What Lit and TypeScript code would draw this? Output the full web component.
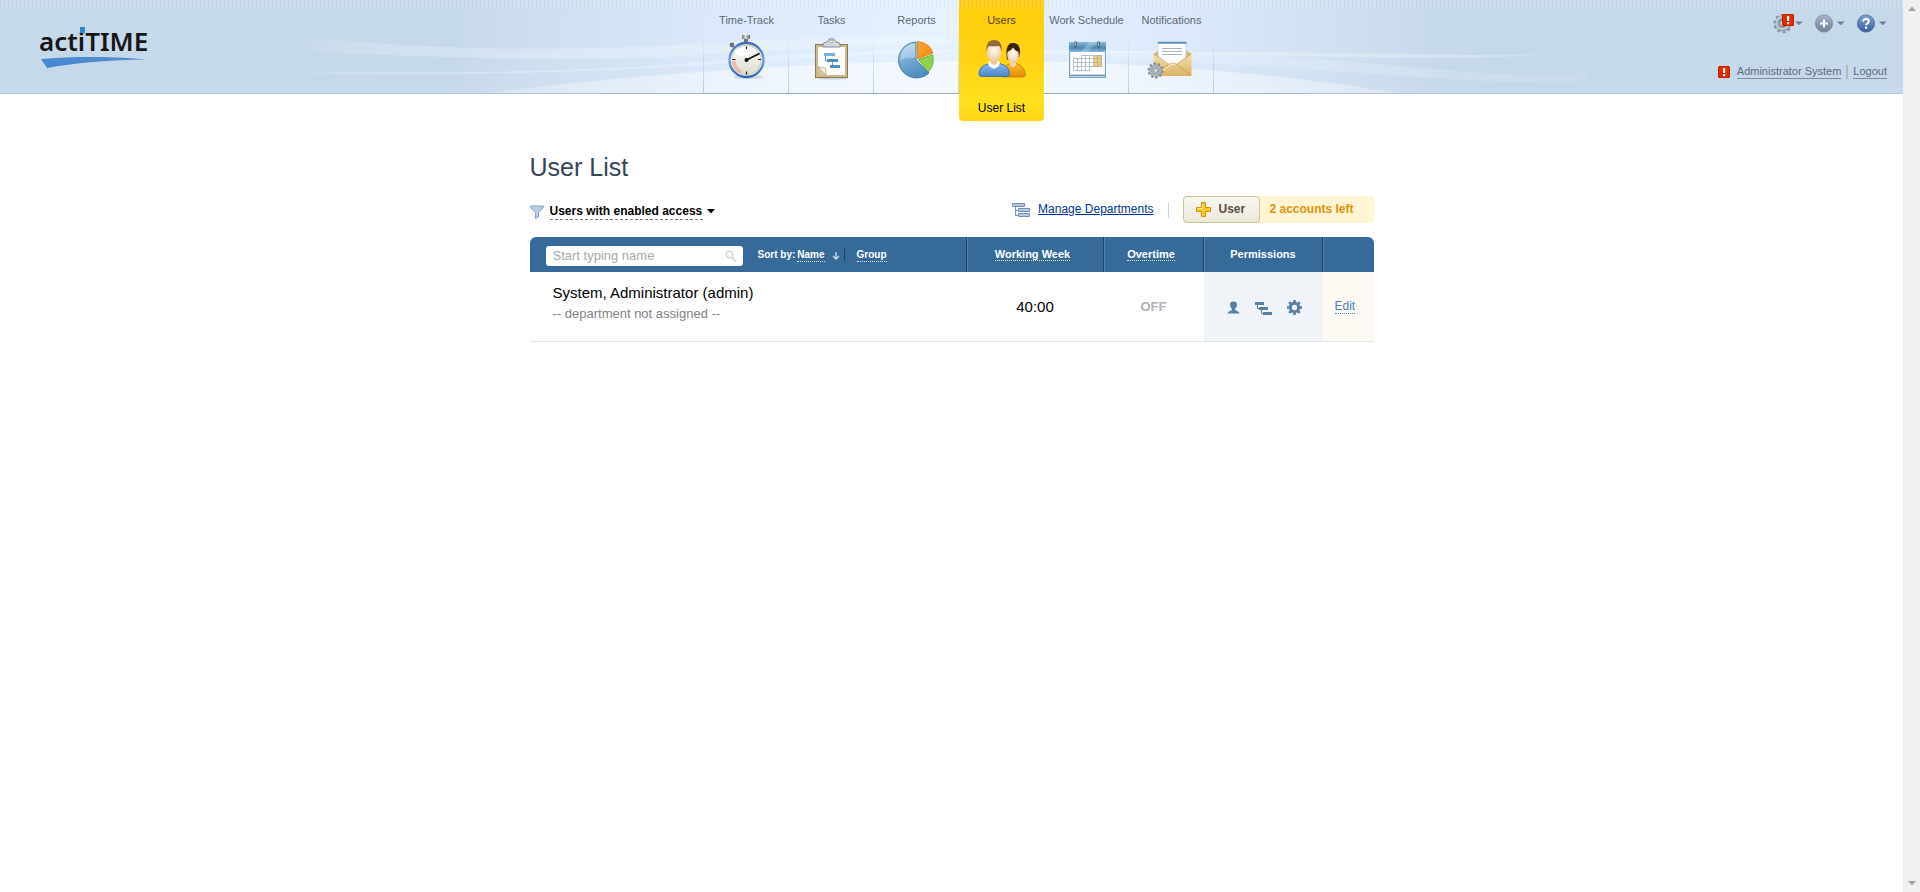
import { LitElement, html, svg, css, nothing } from "lit";
import { customElement, property } from "lit/decorators.js";

const stopwatchIcon = svg`
  <defs>
    <linearGradient id="swRing" x1="0" y1="0" x2="0" y2="1"><stop offset="0" stop-color="#3c6cb8"/><stop offset=".5" stop-color="#6f9fdc"/><stop offset="1" stop-color="#2d62ab"/></linearGradient>
    <linearGradient id="swFace" x1="0" y1="0" x2="0" y2="1"><stop offset="0" stop-color="#fff"/><stop offset="1" stop-color="#dddccd"/></linearGradient>
    <linearGradient id="swMetal"><stop offset="0" stop-color="#777"/><stop offset=".45" stop-color="#ddd"/><stop offset="1" stop-color="#666"/></linearGradient>
  </defs>
  <ellipse cx="25" cy="43" rx="15" ry="2" fill="#8ba3c0" opacity=".35"/>
  <rect x="19" y="1" width="8" height="4" fill="url(#swMetal)"/>
  <rect x="21" y="5" width="4" height="3" fill="#777"/>
  <circle cx="9" cy="11" r="2.4" fill="#6e6e6e"/>
  <path d="M10 12l3 3" stroke="#888" stroke-width="1.5"/>
  <circle cx="23.500" cy="26" r="17" fill="#fff" stroke="url(#swRing)" stroke-width="2.4"/>
  <circle cx="23.500" cy="26" r="14.600" fill="url(#swFace)" stroke="#c9c8bb" stroke-width="1.200"/>
  <path d="M11 27a12.500 12.500 0 0 0 7 11" fill="none" stroke="#f2b9a6" stroke-width="3.400"/>
  <ellipse cx="18" cy="18" rx="6" ry="4" fill="#fff"/>
  <path d="M23.500 12.500v2.500M23.500 37.500v3M9.500 25.500h3M35 25.500h3" stroke="#111" stroke-width="1.100"/>
  <path d="M23.500 26L36.500 19.500" stroke="#111" stroke-width="1.600"/>
  <circle cx="23.500" cy="26" r="2" fill="#111"/>`;

const tasksIcon = svg`
  <ellipse cx="24" cy="44.500" rx="15" ry="1.200" fill="#8ba3c0" opacity=".4"/>
  <rect x="7.500" y="10.500" width="32" height="33" fill="#cbb98d" stroke="#8d7a4c"/>
  <path d="M10 13h27v28H19l-9-9z" fill="#fff"/>
  <path d="M10 33l1 8h8z" fill="#d8c798"/>
  <path d="M10 33l7.500 8 .5-7z" fill="#f4f0e2" stroke="#b9ab84" stroke-width=".8"/>
  <path d="M15 13v-3q0-1.500 4-2 1.500-3.500 4.500-3.500t4.500 3.500q4 .5 4 2v3z" fill="#d5d8dc" stroke="#7c8086" stroke-width=".9"/>
  <circle cx="23.500" cy="7.500" r="1.400" fill="#fff" stroke="#888" stroke-width=".7"/>
  <path d="M17.500 22v5h3M24.500 28v5h3" fill="none" stroke="#6e9bc9" stroke-width="1"/>
  <rect x="16" y="19" width="11" height="3" fill="#7aaee2"/>
  <rect x="19" y="25" width="11" height="3" fill="#4d8ccb"/>
  <rect x="22" y="31" width="10" height="3" fill="#4d8ccb"/>`;

const reportsIcon = svg`
  <defs>
    <linearGradient id="pieBlue" x1="0" y1="0" x2=".3" y2="1"><stop offset="0" stop-color="#b9daf0"/><stop offset=".45" stop-color="#7fb1d6"/><stop offset="1" stop-color="#4f8fc0"/></linearGradient>
    <linearGradient id="pieOrange" x1="0" y1="0" x2="1" y2="1"><stop offset="0" stop-color="#f7a92c"/><stop offset="1" stop-color="#f08a12"/></linearGradient>
  </defs>
  <path d="M23 26V8a18 18 0 1 0 13 31z" fill="url(#pieBlue)" stroke="#3b78a4" stroke-width=".9"/>
  <path d="M22 10Q8 12 7.500 26q7-3 15-2z" fill="#fff" opacity=".3"/>
  <path d="M24.500 24.500V7.500q12 1 15.500 11.500z" fill="url(#pieOrange)" stroke="#d77a0c" stroke-width=".8"/>
  <path d="M25 25.500l14.800-4.700q2.200 10-4.400 17.200z" fill="#8fd14c" stroke="#6aaa2b" stroke-width=".8"/>`;

const usersIcon = svg`
  <defs>
    <linearGradient id="usBlue" x1="0" y1="0" x2="0" y2="1"><stop offset="0" stop-color="#8dbbee"/><stop offset="1" stop-color="#4a86cc"/></linearGradient>
    <linearGradient id="usOrange" x1="0" y1="0" x2="0" y2="1"><stop offset="0" stop-color="#fdc02f"/><stop offset="1" stop-color="#e28a00"/></linearGradient>
    <radialGradient id="usSkin" cx=".5" cy=".4" r=".6"><stop offset="0" stop-color="#fffaf4"/><stop offset="1" stop-color="#edc9a6"/></radialGradient>
  </defs>
  <path d="M24 41q0-9 6-10.500l5-1.500q11 1 12.500 11 0 3-3 3H24z" fill="url(#usOrange)" stroke="#c07400" stroke-width=".7"/>
  <path d="M29 25.500q-2.500-16.500 6-16.500 7.500 0 7 10l-1 4-10 3z" fill="#4a2a14"/>
  <path d="M32 27h6v4l-3 2.500-3-2.500z" fill="#f4d3ae"/>
  <ellipse cx="35" cy="21" rx="5.800" ry="8" fill="url(#usSkin)"/>
  <path d="M29 18q1-9 6-9t6.500 9q-4-.5-6.500-4.500-2 3.500-6 4.500z" fill="#3d2210"/>
  <path d="M.8 40Q1 32 10 30l2-1.500h9l2 1.500q8 1.500 8.500 10 0 2.500-3 2.500H4Q.8 42.500.8 40z" fill="url(#usBlue)" stroke="#2f67ad" stroke-width=".8"/>
  <path d="M10 28l6-3 6 3-1 4-5 3-5-3z" fill="#fff"/>
  <path d="M12.500 25h7v4q-3 4-7 0z" fill="#eec79f"/>
  <ellipse cx="16" cy="18" rx="7.200" ry="9.500" fill="url(#usSkin)"/>
  <path d="M8.500 18Q7.500 6 16 6t7.700 12q-1-5-2.700-6-5 .6-10 0-1.700 1-2.500 6z" fill="#94693c"/>`;

const scheduleIcon = svg`
  <defs>
    <linearGradient id="calTop" x1="0" y1="0" x2="0" y2="1"><stop offset="0" stop-color="#8ab8d8"/><stop offset=".6" stop-color="#4a89b6"/><stop offset="1" stop-color="#8dbbd9"/></linearGradient>
  </defs>
  <rect x="6.500" y="8.500" width="36" height="35" fill="#e9f0f7" stroke="#7ba3c2"/>
  <rect x="8" y="18" width="33" height="22" fill="#fff"/>
  <rect x="6" y="8" width="37" height="10" fill="url(#calTop)"/>
  <path d="M18 18l8-10h8l-9 10z" fill="#fff" opacity=".22"/>
  <path d="M7 41.500h35" stroke="#5b93ba" stroke-width="1.500"/>
  <rect x="31" y="21" width="8" height="12" fill="#f6cf6c"/>
  <path d="M18.500 21.500h20.500M10.500 24.500H39M10.500 28.500H39M10.500 32.500H39M10.500 36.500H27M10.500 24v12.500M14.500 24v12.500M18.500 21v15.500M22.500 21v15.500M26.500 21v15.500M30.500 21v12M34.500 21v12M38.500 21v12" fill="none" stroke="#a9b0be" stroke-width=".8"/>
  <path d="M12.500 8.500v4M35.500 8.500v4" stroke="#555f6b" stroke-width="2.600" stroke-linecap="round"/>
  <path d="M12.300 8v4M35.300 8v4" stroke="#c5ccd4" stroke-width=".9"/>`;

const notificationsIcon = svg`
  <defs>
    <linearGradient id="ntEnv" x1="0" y1="0" x2="0" y2="1"><stop offset="0" stop-color="#f3e1b0"/><stop offset="1" stop-color="#dcb468"/></linearGradient>
  </defs>
  <path d="M6 20l6-5h25l6 5v22H6z" fill="#d9b467"/>
  <path d="M10 8h28v17L27 34h-6l-11-9z" fill="#fff" stroke="#c9d3de" stroke-width=".8"/>
  <path d="M10 8.800h28.500" stroke="#4e8bbd" stroke-width="1.800"/>
  <path d="M14 14.500h20M14 17.500h20M14 20.500h20" stroke="#a9b4c1" stroke-width="1"/>
  <path d="M5.500 19.500L20 30.500h9l14.500-11v22h-38z" fill="url(#ntEnv)"/>
  <path d="M6 41l15-11q3.500-2.500 7 0l15 11M5.500 19.500L20 30M43.500 19.500L29 30" fill="none" stroke="#c29a4c" stroke-width=".8"/>
  <path d="M7.500 42L23 30.500" stroke="#fff4cf" stroke-width="1"/>
  <circle cx="7.500" cy="36.500" r="7" fill="none" stroke="#7f8894" stroke-width="2" stroke-dasharray="2.400 2"/>
  <circle cx="7.500" cy="36.500" r="4.600" fill="#e6ebf1" stroke="#8b94a0" stroke-width="3.400"/>
  <circle cx="7.500" cy="36.500" r="4.800" fill="none" stroke="#b4bdc8" stroke-width="1.400"/>
  <circle cx="7.500" cy="36.500" r="2" fill="#dfe6ee" stroke="#69727e" stroke-width=".8"/>`;

const sections = [
  { label: "Time-Track", icon: stopwatchIcon },
  { label: "Tasks", icon: tasksIcon },
  { label: "Reports", icon: reportsIcon },
  { label: "Users", icon: usersIcon, page: "User List" },
  { label: "Work Schedule", icon: scheduleIcon },
  { label: "Notifications", icon: notificationsIcon },
];

@customElement("alert-badge")
class AlertBadge extends LitElement {
  static styles = css`
    :host { display: block; width: 12px; height: 12px; }
    svg { display: block; }
  `;
  render() {
    return html`<svg width="12" height="12" viewBox="0 0 12 12" aria-hidden="true">
      <rect width="12" height="12" rx="1.500" fill="#c81a00"/>
      <rect x="1" y="1" width="10" height="10" rx="1" fill="#e22c00"/>
      <path d="M5 2h2.200v5H5zM5 8.200h2.200v2H5z" fill="#fff"/>
    </svg>`;
  }
}

@customElement("app-header")
class AppHeader extends LitElement {
  static styles = css`
    :host {
      display: grid;
      grid-template-columns: minmax(0, 1fr);
      height: 94px;
      position: relative;
      z-index: 1;
    }
    .backdrop, .bar { grid-area: 1 / 1; }
    .backdrop {
      display: flex;
      justify-content: center;
      overflow: hidden;
      background: #c6d9ea;
      border-bottom: 1px solid #b5c9dc;
      height: 93px;
    }
    .backdrop svg { flex: none; }
    .stripes {
      grid-area: 1 / 1;
      height: 13px;
      background: repeating-linear-gradient(90deg, rgba(120, 150, 185, 0.1) 0 1px, rgba(255, 255, 255, 0.14) 1px 4px);
      -webkit-mask-image: linear-gradient(#000, transparent);
      mask-image: linear-gradient(#000, transparent);
    }
    .edge {
      grid-area: 1 / 1;
      align-self: end;
      justify-self: center;
      width: 1000px;
      height: 1px;
      background: linear-gradient(90deg, transparent, #9aa9bb 35%, #9aa9bb 65%, transparent);
    }
    .bar {
      display: grid;
      grid-template-columns: minmax(0, 1fr) auto minmax(0, 1fr);
      align-items: start;
    }
    .logo {
      justify-self: start;
      margin: 25px 0 0 39px;
      display: flex;
      flex-direction: column;
      text-decoration: none;
      font: 600 26px/32px "Noto Sans", "Open Sans", sans-serif;
    }
    .word { color: #161616; }
    .i { position: relative; }
    .i::after {
      content: "";
      position: absolute;
      left: 2px;
      top: 4px;
      width: 5px;
      height: 6px;
      background: #2c8ac9;
    }
    .swoosh { display: block; margin: 0 0 0 2px; }
    nav { padding-left: 14px; }
    ul {
      display: flex;
      list-style: none;
      margin: 0;
      padding: 0 0 0 1px;
      background: linear-gradient(rgba(150, 180, 210, 0), rgba(150, 180, 210, 0.6)) 0 34px / 1px 59px no-repeat;
    }
    li {
      width: 85px;
      height: 93px;
      background: linear-gradient(rgba(150, 180, 210, 0), rgba(150, 180, 210, 0.6)) 100% 34px / 1px 59px no-repeat;
    }
    .tab {
      display: flex;
      flex-direction: column;
      align-items: center;
      padding: 13px 0 0 0;
      color: #5d6875;
      font-size: 11px;
      line-height: 14px;
      text-decoration: none;
      white-space: nowrap;
    }
    .tab svg { margin-top: 7px; overflow: visible; }
    .active {
      background: linear-gradient(#ffcd0a, #ffd414 50%, #ffe01e 85%, #ffd60f);
      border-radius: 0 0 4px 4px;
      height: 121px;
      margin-bottom: -28px;
    }
    .active .tab { color: #4c4326; }
    .sub {
      display: block;
      margin-top: 19px;
      text-align: center;
      color: #000;
      font-size: 12px;
      line-height: 14px;
      text-decoration: none;
    }
    .side {
      justify-self: end;
      display: flex;
      flex-direction: column;
      align-items: flex-end;
      gap: 32px;
      padding: 13px 16px 0 0;
    }
    .tools { display: flex; gap: 12px; }
    .tool {
      display: flex;
      align-items: center;
      gap: 4px;
      border: 0;
      padding: 0;
      background: none;
      position: relative;
    }
    .tool alert-badge { position: absolute; left: 9px; top: 1px; }
    .account {
      display: flex;
      align-items: center;
      font-size: 11px;
      line-height: 13px;
    }
    .account a {
      color: #5d6c7e;
      text-decoration: none;
      border-bottom: 1px solid #7d8b9c;
    }
    .account alert-badge { margin-right: 7px; }
    .bar-sep { width: 2px; height: 14px; margin: 0 5px; background: #b3bac1; }
  `;

  caret = html`<svg width="8" height="5" viewBox="0 0 8 5" aria-hidden="true"><path d="M0 .5h8L4 4.500z" fill="#6c7f9e"/><path d="M1 5l3-.5L8 1" stroke="#e3ecf5" stroke-width=".6" fill="none"/></svg>`;

  render() {
    return html`
      <div class="backdrop" aria-hidden="true">
        <svg width="1280" height="93" viewBox="312 0 1280 93">
          <defs>
            <linearGradient id="glow"><stop offset="0" stop-color="#e2eeff" stop-opacity="0"/><stop offset=".3" stop-color="#deebfc" stop-opacity=".95"/><stop offset=".5" stop-color="#e6f2ff"/><stop offset=".72" stop-color="#deebfc" stop-opacity=".95"/><stop offset="1" stop-color="#e2eeff" stop-opacity="0"/></linearGradient>
            <linearGradient id="hill"><stop offset="0" stop-color="#fff" stop-opacity=".25"/><stop offset=".4" stop-color="#fff" stop-opacity=".55"/><stop offset=".7" stop-color="#fff" stop-opacity=".5"/><stop offset="1" stop-color="#fff" stop-opacity=".3"/></linearGradient>
            <linearGradient id="wave"><stop offset="0" stop-color="#fff" stop-opacity=".06"/><stop offset=".15" stop-color="#fff" stop-opacity=".22"/><stop offset="1" stop-color="#fff" stop-opacity=".25"/></linearGradient>
            <linearGradient id="thread"><stop offset="0" stop-color="#fff" stop-opacity=".08"/><stop offset=".12" stop-color="#fff" stop-opacity=".25"/><stop offset=".9" stop-color="#fff" stop-opacity=".28"/><stop offset="1" stop-color="#fff" stop-opacity=".03"/></linearGradient>
            <linearGradient id="drift"><stop offset="0" stop-color="#fff" stop-opacity=".18"/><stop offset=".7" stop-color="#fff" stop-opacity=".16"/><stop offset="1" stop-color="#fff" stop-opacity=".08"/></linearGradient>
          </defs>
          <path d="M450 0H1440V93H450z" fill="url(#glow)"/>
          <path d="M485 93Q720 64 950 61T1400 93z" fill="url(#hill)"/>
          <path d="M312 38Q490 56 700 44T950 39V44Q820 46 700 55T312 52z" fill="url(#wave)"/>
          <path d="M312 71Q560 75 700 62T950 50Q1300 52 1440 54.500T1587 49V53Q1500 58 1440 58T1200 54.500 950 52 700 65 312 74z" fill="url(#thread)"/>
          <path d="M1040 50Q1240 50 1400 66T1587 70V81Q1500 84 1400 76T1040 54z" fill="url(#drift)"/>
        </svg>
      </div>
      <div class="stripes"></div>
      <div class="edge"></div>
      <div class="bar">
        <a class="logo" href="#" aria-label="actiTIME">
          <span class="word">act<span class="i">i</span>TIME</span>
          <svg class="swoosh" width="106" height="12" viewBox="0 0 106 12" aria-hidden="true">
            <defs><linearGradient id="sw" x1="0" y1="1" x2="1" y2="0"><stop offset="0" stop-color="#3f86d6"/><stop offset="1" stop-color="#5a8dc9"/></linearGradient></defs>
            <path d="M0 2Q50-2.500 106 2.500 50 3 6 11z" fill="url(#sw)"/>
          </svg>
        </a>
        <nav aria-label="Main">
          <ul>
            ${sections.map((s) => html`
              <li class=${s.page ? "active" : ""}>
                <a class="tab" href="#">${s.label}
                  <svg width="48" height="48" viewBox="0 0 48 48" aria-hidden="true">${s.icon}</svg>
                </a>
                ${s.page ? html`<a class="sub" href="#">${s.page}</a>` : nothing}
              </li>`)}
          </ul>
        </nav>
        <div class="side">
          <div class="tools">
            <button class="tool" aria-label="Settings">
              <svg width="18" height="20" viewBox="0 0 18 20" aria-hidden="true">
                <circle cx="10" cy="10.500" r="8.300" fill="none" stroke="#8592a2" stroke-width="2.600" stroke-dasharray="3 2.215"/>
                <circle cx="10" cy="10.500" r="5.600" fill="none" stroke="#929eac" stroke-width="4.600"/>
                <circle cx="9.500" cy="10" r="6" fill="none" stroke="#c3cbd5" stroke-width="2"/>
                <circle cx="10" cy="10.500" r="3.400" fill="#c6d9ea" stroke="#6b7786"/>
              </svg>
              <alert-badge></alert-badge>${this.caret}
            </button>
            <button class="tool" aria-label="Add">
              <svg width="18" height="20" viewBox="0 0 18 20" aria-hidden="true">
                <defs><linearGradient id="tp" x1="0" y1="0" x2="0" y2="1"><stop offset="0" stop-color="#a3b4cb"/><stop offset="1" stop-color="#6e7f98"/></linearGradient></defs>
                <circle cx="9" cy="10.500" r="8.600" fill="url(#tp)" stroke="#7d8ca3" stroke-width=".8"/>
                <path d="M9 6.500v8M5 10.500h8" stroke="#fff" stroke-width="2"/>
              </svg>${this.caret}
            </button>
            <button class="tool" aria-label="Help">
              <svg width="18" height="20" viewBox="0 0 18 20" aria-hidden="true">
                <defs><linearGradient id="th" x1="0" y1="0" x2="0" y2="1"><stop offset="0" stop-color="#7fa2d2"/><stop offset="1" stop-color="#365f9c"/></linearGradient></defs>
                <circle cx="9" cy="10.500" r="8.600" fill="url(#th)" stroke="#46699c" stroke-width=".8"/>
                <path d="M6.200 8.600Q6.200 6 9 6t2.800 2.300Q11.800 9.600 10.400 10.400 9.100 11.200 9.100 12.300" fill="none" stroke="#fff" stroke-width="1.900"/>
                <circle cx="9.100" cy="14.700" r="1.200" fill="#fff"/>
              </svg>${this.caret}
            </button>
          </div>
          <div class="account">
            <alert-badge></alert-badge>
            <a href="#">Administrator System</a>
            <span class="bar-sep"></span>
            <a href="#">Logout</a>
          </div>
        </div>
      </div>`;
  }
}

@customElement("user-table")
class UserTable extends LitElement {
  @property({ attribute: false }) users = [
    { name: "System, Administrator (admin)", department: "-- department not assigned --", week: "40:00", overtime: "OFF" },
  ];

  static styles = css`
    :host { display: block; }
    table {
      width: 100%;
      table-layout: fixed;
      border-collapse: separate;
      border-spacing: 0;
    }
    .c-week { width: 137px; }
    .c-over { width: 100px; }
    .c-perm { width: 119px; }
    .c-edit { width: 51px; }
    th {
      height: 35px;
      padding: 0;
      background: #366a99;
      color: #fff;
      font-size: 11px;
      line-height: 13px;
      border-right: 1px solid #1f4263;
      border-left: 1px solid #4a84b8;
      box-sizing: border-box;
    }
    th:first-child { border-left: 0; border-top-left-radius: 6px; }
    th:last-child { border-right: 0; border-top-right-radius: 6px; }
    .sortable { padding-right: 5px; }
    .link {
      color: #fff;
      text-decoration: none;
      border-bottom: 1px dotted #dfe9f2;
    }
    .first { display: flex; align-items: center; padding-left: 16px; }
    .search {
      display: flex;
      align-items: center;
      width: 197px;
      height: 20px;
      margin-top: 3px;
      margin-right: 15px;
      background: #fff;
      border-radius: 3px;
    }
    .search input {
      flex: 1;
      min-width: 0;
      border: 0;
      outline: 0;
      padding: 0 0 0 7px;
      background: none;
      font: 13px/18px "Liberation Sans", Arial, sans-serif;
      color: #000;
    }
    .search input::placeholder { color: #a5abb0; opacity: 1; }
    .search svg { margin-right: 6px; }
    .sort { display: flex; align-items: center; font-size: 10px; }
    .sort-label { margin-right: 2px; }
    .arrow { margin: 3px 4px 0 7px; }
    .sort-sep { width: 1px; height: 13px; margin-right: 12px; background: #1f4263; }
    td {
      height: 69px;
      padding: 0;
      text-align: center;
      border-bottom: 1px solid #dfe5ee;
    }
    .who { text-align: left; padding-left: 23px; vertical-align: top; }
    .name { padding-top: 11px; font-size: 15px; line-height: 20px; color: #000; }
    .dept { font-size: 13px; line-height: 22px; color: #828282; }
    .week { font-size: 15px; color: #000; }
    .over { font-size: 13px; font-weight: 700; color: #b0b2b6; }
    .perm { background: #f0f3f8; }
    .icons { display: flex; justify-content: center; align-items: center; gap: 15px; padding: 2px 0 0 2px; }
    .edit { background: #fdfaf3; text-align: left; padding-left: 12px; font-size: 12px; line-height: 15px; }
    .edit a { color: #4a82b6; text-decoration: none; border-bottom: 1px dotted #4a82b6; }
  `;

  render() {
    return html`<table>
      <colgroup><col><col class="c-week"><col class="c-over"><col class="c-perm"><col class="c-edit"></colgroup>
      <thead><tr>
        <th scope="col">
          <div class="first">
            <label class="search">
              <input type="text" placeholder="Start typing name" aria-label="Start typing name">
              <svg width="12" height="13" viewBox="0 0 12 13" aria-hidden="true"><circle cx="4.500" cy="4.500" r="3.300" fill="none" stroke="#dadada" stroke-width="1.800"/><path d="M7 7.500l4 4" stroke="#dadada" stroke-width="2.400"/></svg>
            </label>
            <div class="sort">
              <span class="sort-label">Sort by:</span>
              <a class="link" href="#">Name</a>
              <svg class="arrow" width="8" height="8" viewBox="0 0 8 8" aria-hidden="true"><path d="M4 0v7M1 4l3 3 3-3" fill="none" stroke="#c3d7e8" stroke-width="1.400"/></svg>
              <span class="sort-sep"></span>
              <a class="link" href="#">Group</a>
            </div>
          </div>
        </th>
        <th scope="col" class="sortable"><a class="link" href="#">Working Week</a></th>
        <th scope="col" class="sortable"><a class="link" href="#">Overtime</a></th>
        <th scope="col">Permissions</th>
        <th scope="col" aria-label="Actions"></th>
      </tr></thead>
      <tbody>${this.users.map((u) => html`<tr>
        <td class="who"><div class="name">${u.name}</div><div class="dept">${u.department}</div></td>
        <td class="week">${u.week}</td>
        <td class="over">${u.overtime}</td>
        <td class="perm"><div class="icons">
          <svg width="13" height="13" viewBox="0 0 13 13" aria-hidden="true"><path d="M3 3.500Q3 .5 6.500.5T10 3.500Q10 6.500 8 8q0 1.500 2 2 2.500.5 2.500 2.500H.5Q.5 10.500 3 10q2-.5 2-2-2-1.500-2-4.500z" fill="#577fa4"/></svg>
          <svg width="17" height="14" viewBox="0 0 17 14" aria-hidden="true"><path d="M0 1h9v3H0zM4 6h9v3H4zM8 11h9v3H8z" fill="#577fa4"/><path d="M2.500 4v3.500H4M6.500 9v3.500H8" fill="none" stroke="#577fa4"/></svg>
          <svg width="15" height="15" viewBox="0 0 15 15" aria-hidden="true"><circle cx="7.500" cy="7.500" r="4.200" fill="none" stroke="#577fa4" stroke-width="3"/><path d="M7.500 0v3M7.500 12v3M0 7.500h3M12 7.500h3M2.200 2.200l2 2M10.800 10.800l2 2M2.200 12.800l2-2M10.800 4.200l2-2" stroke="#577fa4" stroke-width="2.600"/></svg>
        </div></td>
        <td class="edit"><a href="#">Edit</a></td>
      </tr>`)}</tbody>
    </table>`;
  }
}

@customElement("app-root")
class AppRoot extends LitElement {
  static styles = css`
    :host {
      display: grid;
      grid-template-columns: minmax(0, 1fr) 17px;
      min-height: 100vh;
      background: #fff;
      color: #000;
      font: 12px/15px "Liberation Sans", Arial, sans-serif;
    }
    main {
      box-sizing: border-box;
      max-width: 844px;
      margin: 58px auto 0;
    }
    h1 {
      margin: 0;
      font-size: 25px;
      line-height: 30px;
      font-weight: 400;
      color: #344559;
    }
    .toolbar {
      display: flex;
      align-items: center;
      margin: 14px 0;
      height: 27px;
    }
    .filter { display: flex; align-items: center; padding-top: 4px; }
    .filter select {
      appearance: none;
      margin: 0 4px 0 6px;
      border: 0;
      border-bottom: 1px dashed #777;
      border-radius: 0;
      padding: 0;
      background: none;
      color: #000;
      font: 700 12px/15px "Liberation Sans", Arial, sans-serif;
    }
    .departments { display: flex; align-items: center; gap: 8px; margin-left: auto; }
    .departments a { color: #039; }
    .departments span { width: 1px; height: 15px; margin: 2px 14px 0 6px; background: #cfd2da; }
    .accounts {
      display: flex;
      align-items: center;
      height: 27px;
      width: 191px;
      background: #fff4d3;
      border-radius: 4px;
      color: #e0940c;
      font-weight: 700;
    }
    .add {
      box-sizing: border-box;
      display: flex;
      align-items: center;
      width: 77px;
      height: 27px;
      margin-right: 10px;
      padding: 0 0 0 12px;
      gap: 8px;
      border: 1px solid #cdc294;
      border-radius: 4px;
      background: linear-gradient(#f8f7f1, #ece9db);
      color: #5a4c40;
      font: 700 12px/15px "Liberation Sans", Arial, sans-serif;
    }
    .scrollbar {
      display: flex;
      flex-direction: column;
      justify-content: space-between;
      align-items: center;
      background: #f0f0f0;
      padding: 6px 0;
    }
  `;

  render() {
    return html`
      <div>
        <app-header></app-header>
        <main>
          <h1>User List</h1>
          <div class="toolbar">
            <div class="filter">
              <svg width="14" height="14" viewBox="0 0 14 14" aria-hidden="true"><path d="M.5 1h13v1.500L8.500 7.500v4.500l-3 1.500v-6L.5 2.500z" fill="#b9cde4" stroke="#86a6c9"/></svg>
              <select aria-label="User filter"><option>Users with enabled access</option></select>
              <svg width="8" height="5" viewBox="0 0 8 5" aria-hidden="true"><path d="M0 0h8L4 4.500z" fill="#000"/></svg>
            </div>
            <div class="departments">
              <svg width="18" height="14" viewBox="0 0 18 14" aria-hidden="true"><path d="M3.500 4v8.500H7M3.500 7.500H7" fill="none" stroke="#6f8fc0"/><path d="M.5.500h12v3H.5zM6.500 5.500h11v3h-11zM6.500 10.500h11v3h-11z" fill="#b5c5de" stroke="#6f8fc0"/></svg>
              <a href="#">Manage Departments</a>
              <span></span>
            </div>
            <div class="accounts">
              <button class="add"><svg width="15" height="15" viewBox="0 0 15 15" aria-hidden="true"><path d="M5.500.500h4v5h5v4h-5v5h-4v-5h-5v-4h5z" fill="#fbc92f" stroke="#d9910d"/><path d="M6.500 2v4.500H2" fill="none" stroke="#ffe88c"/></svg>User</button>
              2 accounts left
            </div>
          </div>
          <user-table></user-table>
        </main>
      </div>
      <div class="scrollbar" aria-hidden="true">
        <svg width="8" height="5" viewBox="0 0 8 5"><path d="M0 5l4-4.500L8 5z" fill="#a3a3a3"/></svg>
        <svg width="8" height="5" viewBox="0 0 8 5"><path d="M0 0l4 4.500L8 0z" fill="#a3a3a3"/></svg>
      </div>`;
  }
}
